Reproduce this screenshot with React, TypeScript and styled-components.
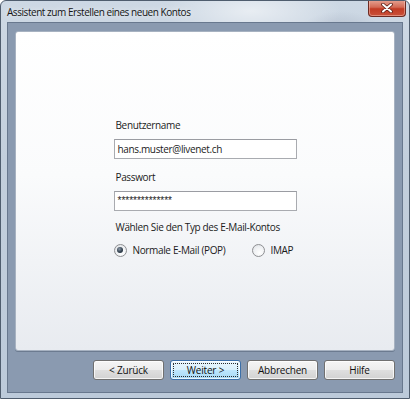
import React from "react";
import styled, { createGlobalStyle } from "styled-components";

const GlobalStyle = createGlobalStyle`
  html, body {
    margin: 0;
    padding: 0;
    background: #ffffff;
  }

  body {
    font-family: "Open Sans", "Noto Sans", sans-serif;
    font-size: 10px;
    letter-spacing: -0.35px;
    color: #1b1b1b;
  }
`;

const Window = styled.div`
  width: 410px;
  height: 399px;
  box-sizing: border-box;

  display: flex;
  flex-direction: column;

  border: 1px solid #4f5d6e;
  border-radius: 6px 6px 0 0;

  background:
    radial-gradient(ellipse 90px 30px at 250px 10px, rgba(255, 255, 255, 0.55), transparent),
    radial-gradient(ellipse 40px 20px at 340px 30px, rgba(140, 150, 170, 0.35), transparent),
    linear-gradient(180deg, #cdd8e4 0%, #c3cfdc 40%, #bccada 100%);

  overflow: hidden;
`;

const TitleBar = styled.div`
  height: 21px;

  display: flex;
  align-items: flex-start;
  justify-content: space-between;

  padding-left: 6px;
  padding-right: 3px;
`;

const Title = styled.div`
  margin-top: 4px;

  color: #141414;

  line-height: 14px;
  letter-spacing: -0.45px;
  text-shadow: 0 0 6px rgba(255, 255, 255, 0.9);
`;

const CloseButton = styled.div`
  width: 38px;
  height: 17px;
  margin-top: -1px;

  display: flex;
  align-items: center;
  justify-content: center;

  box-sizing: border-box;
  border: 1px solid #6d2a22;
  border-top: none;
  border-radius: 0 0 4px 4px;

  background: linear-gradient(180deg, #e7a494 0%, #d36a55 45%, #c23b24 55%, #c9513a 100%);
  box-shadow: inset 0 0 0 1px rgba(255, 210, 200, 0.45);
`;

const Client = styled.div`
  flex: 1;

  margin: 0 6px 5px 6px;

  display: flex;
  flex-direction: column;

  padding: 8px 7px 12px 7px;

  border: 1px solid #68788e;

  background: #8a9ab0;
`;

const Panel = styled.div`
  flex: 1;

  display: flex;
  flex-direction: column;
  align-items: center;

  padding-top: 87px;

  border: 1px solid #a7b2c1;
  border-radius: 3px;

  background: linear-gradient(180deg, #ffffff 0%, #fafbfc 45%, #e8ebf0 100%);
  box-shadow: 0 1px 0 #6c7b90;
`;

const Form = styled.div`
  width: 183px;

  display: flex;
  flex-direction: column;
`;

const Label = styled.div<{ $gap: number }>`
  margin-top: ${(p) => p.$gap}px;
  padding-left: 2px;

  line-height: 12px;
  white-space: nowrap;
`;

const TextBox = styled.div<{ $secret?: boolean }>`
  height: 20px;
  margin-top: 8px;

  display: flex;
  align-items: center;

  box-sizing: border-box;
  padding-left: 3px;

  border: 1px solid #a9abb0;
  border-top-color: #9a9ca2;

  background: #ffffff;

  font-family: ${(p) => (p.$secret ? '"Liberation Sans", Arial, sans-serif' : "inherit")};
  letter-spacing: ${(p) => (p.$secret ? "0" : "inherit")};
  line-height: 12px;
`;

const RadioRow = styled.div`
  height: 14px;
  margin-top: 10px;

  display: flex;
  align-items: center;
`;

const RadioOption = styled.label<{ $width?: number }>`
  width: ${(p) => (p.$width ? `${p.$width}px` : "auto")};

  display: flex;
  align-items: center;
  gap: 6px;

  white-space: nowrap;
`;

const RadioCircle = styled.span<{ $checked?: boolean }>`
  position: relative;

  width: 13px;
  height: 13px;

  box-sizing: border-box;
  border: 1px solid #8e8f92;
  border-radius: 50%;

  background: radial-gradient(circle at 60% 70%, #ffffff 0%, #eef0f2 55%, #d9dce0 100%);

  &::after {
    content: "";
    display: ${(p) => (p.$checked ? "block" : "none")};

    position: absolute;
    top: 2.5px;
    left: 2.5px;

    width: 6px;
    height: 6px;

    border-radius: 50%;

    background: radial-gradient(circle at 40% 35%, #8a97a6 0%, #33414f 55%, #1b2633 100%);
  }
`;

const ButtonRow = styled.div`
  margin-top: 9px;

  display: flex;
  justify-content: flex-end;
  gap: 6px;
`;

const Button = styled.div<{ $default?: boolean }>`
  position: relative;

  width: 71px;
  height: 20px;

  display: flex;
  align-items: center;
  justify-content: center;

  box-sizing: border-box;
  border: 1px solid ${(p) => (p.$default ? "#3c6fa8" : "#707070")};
  border-radius: 3px;

  background: ${(p) =>
    p.$default
      ? "linear-gradient(180deg, #eaf6fd 0%, #d9f0fc 50%, #bee6fd 51%, #a7d9f5 100%)"
      : "linear-gradient(180deg, #f5f5f5 0%, #ececec 50%, #dfdfdf 51%, #d2d2d2 100%)"};
  box-shadow: inset 0 0 0 1px rgba(255, 255, 255, 0.75);

  color: #111111;
  letter-spacing: -0.2px;
  white-space: pre;

  &::after {
    content: "";
    display: ${(p) => (p.$default ? "block" : "none")};

    position: absolute;
    inset: 2px;

    border: 1px dotted #2a2a2a;
    border-radius: 1px;
  }
`;

export default function App() {
  return (
    <>
      <GlobalStyle />
      <Window>
        <TitleBar>
          <Title>Assistent zum Erstellen eines neuen Kontos</Title>
          <CloseButton>
            <svg width="12" height="10" viewBox="0 0 12 10">
              <path
                d="M2 1.5 L10 8.5 M10 1.5 L2 8.5"
                stroke="#5a1d14"
                strokeWidth="3.6"
                strokeLinecap="round"
              />
              <path
                d="M2 1.5 L10 8.5 M10 1.5 L2 8.5"
                stroke="#ffffff"
                strokeWidth="2"
                strokeLinecap="round"
              />
            </svg>
          </CloseButton>
        </TitleBar>
        <Client>
          <Panel>
            <Form>
              <Label $gap={0}>Benutzername</Label>
              <TextBox>hans.muster@livenet.ch</TextBox>
              <Label $gap={12}>Passwort</Label>
              <TextBox $secret>**************</TextBox>
              <Label $gap={10}>Wählen Sie den Typ des E-Mail-Kontos</Label>
              <RadioRow>
                <RadioOption $width={138}>
                  <RadioCircle $checked />
                  Normale E-Mail (POP)
                </RadioOption>
                <RadioOption>
                  <RadioCircle />
                  IMAP
                </RadioOption>
              </RadioRow>
            </Form>
          </Panel>
          <ButtonRow>
            <Button>{"< Zurück"}</Button>
            <Button $default>{"Weiter >"}</Button>
            <Button>Abbrechen</Button>
            <Button>Hilfe</Button>
          </ButtonRow>
        </Client>
      </Window>
    </>
  );
}
